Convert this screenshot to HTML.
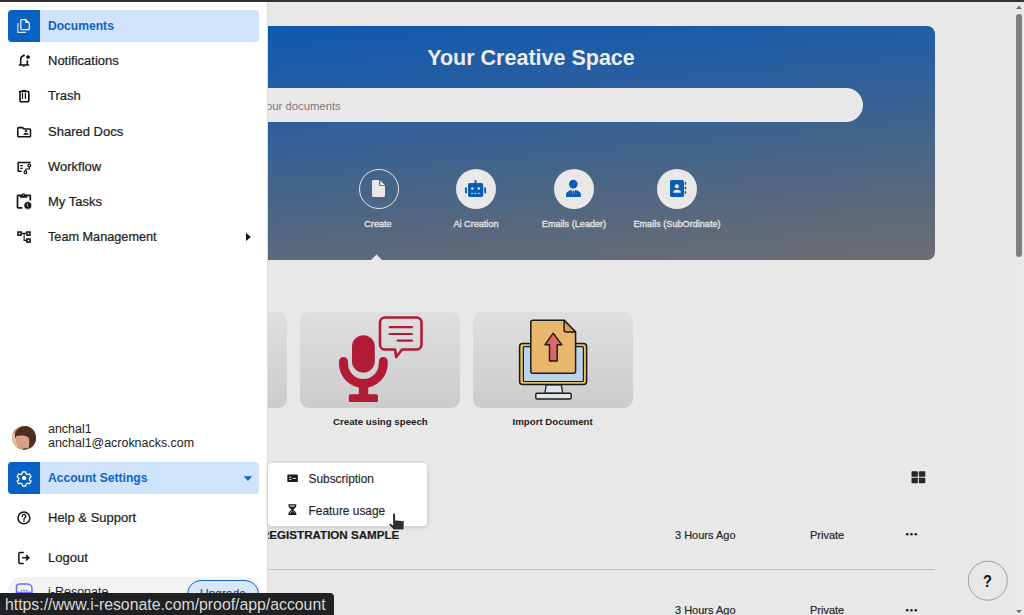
<!DOCTYPE html>
<html><head><meta charset="utf-8">
<style>
*{margin:0;padding:0;box-sizing:border-box}
html,body{width:1024px;height:615px;overflow:hidden;background:#e8e8e8;font-family:"Liberation Sans",sans-serif;position:relative}
.abs{position:absolute}
svg{position:absolute;left:0;top:0;overflow:visible}
#topbar{left:0;top:0;width:1024px;height:2px;background:#323232;z-index:50}
#side{left:0;top:2px;width:267px;height:613px;background:#fff}
.item{position:absolute;left:8px;width:251px;height:32px;font-size:13px;color:#1d1d1d}
.item .ic{position:absolute;left:0;top:0;width:32px;height:32px}
.item .tx{position:absolute;left:40px;top:0;line-height:32px;white-space:nowrap;-webkit-text-stroke:0.22px #1d1d1d}
.item.sel{background:#cfe3fb;border-radius:4px;color:#0e63c6;font-weight:bold}
.item.sel .tx{-webkit-text-stroke:0}
.item.sel .ic{background:#0a62c4;border-radius:4px 0 0 4px}
#banner{left:268px;top:26px;width:667px;height:234px;border-radius:0 8px 8px 0;background:linear-gradient(175deg,#0f59b0 0%,#2a5fa0 30%,#486587 60%,#6e6d71 100%)}
#title{left:268px;top:44.5px;width:526px;text-align:center;color:#ececec;font-size:21.5px;font-weight:bold;line-height:26px}
#search{left:268px;top:88px;width:595px;height:34px;border-radius:0 17px 17px 0;background:#e9e9e9;color:#7a7a7a;font-size:11.3px;line-height:35px}
.circ{position:absolute;width:40px;height:40px;border-radius:50%;background:#e8e8e8}
.lab{position:absolute;color:#e4e4e4;font-size:9.8px;font-weight:normal;-webkit-text-stroke:0.35px #e4e4e4;white-space:nowrap;line-height:12px;transform:translateX(-50%) scaleX(0.93)}
.card{position:absolute;top:312px;width:160px;height:96px;border-radius:9px;background:linear-gradient(180deg,#dfdfdf,#cccccc)}
.clab{position:absolute;top:414.5px;font-size:9.7px;font-weight:bold;color:#222;white-space:nowrap;line-height:14px}
#popup{left:267.5px;top:462.5px;width:159px;height:63px;background:#fff;border-radius:4px;box-shadow:0 1px 5px rgba(0,0,0,.18);z-index:20}
.pi{position:absolute;left:41px;font-size:11.9px;color:#1f1f1f;white-space:nowrap;line-height:14px;-webkit-text-stroke:0.15px #1f1f1f}
.row{position:absolute;font-size:11px;color:#252525;white-space:nowrap;line-height:14px;-webkit-text-stroke:0.2px #252525}
#status{left:0;top:593px;width:334px;height:22px;background:#202122;color:#dadada;font-size:15.85px;line-height:22px;padding-left:5px;padding-top:1px;border-radius:0 4px 0 0;z-index:60;letter-spacing:-0.02px}
</style></head><body>
<div id="topbar" class="abs"></div>

<!-- main area -->
<div id="banner" class="abs"></div>
<div id="title" class="abs">Your Creative Space</div>
<div id="search" class="abs"><span style="position:absolute;left:-2px;top:1px">our documents</span></div>

<div class="circ" style="left:359px;top:169px;background:transparent;border:1.2px solid #e6e6e6"></div>
<div class="circ" style="left:456px;top:169px"></div>
<div class="circ" style="left:554px;top:169px"></div>
<div class="circ" style="left:657px;top:169px"></div>
<div class="lab" id="l1" style="left:378.3px;top:217.5px">Create</div>
<div class="lab" id="l2" style="left:475.5px;top:217.5px">Ai Creation</div>
<div class="lab" id="l3" style="left:573.5px;top:217.5px">Emails (Leader)</div>
<div class="lab" id="l4" style="left:677px;top:217.5px">Emails (SubOrdinate)</div>

<!-- banner icons -->
<svg width="1024" height="615">
  <!-- create doc -->
  <path d="M373.5 180.1h5.6v5.6h5.9v9.9a1.5 1.5 0 0 1-1.5 1.5h-10a1.5 1.5 0 0 1-1.5-1.5v-14a1.5 1.5 0 0 1 1.5-1.5z" fill="#e8e8e8"/>
  <path d="M380.2 180.6l4.6 4.4h-4.6z" fill="#e8e8e8"/>
  <!-- pointer triangle -->
  <path d="M370.5 260.5L376.5 254.5L382.5 260.5Z" fill="#e8e8e8"/>
  <!-- robot -->
  <rect x="468" y="183" width="15.2" height="14" rx="1.8" fill="#0b5cb5"/>
  <rect x="474.6" y="180" width="1.9" height="4" rx="0.9" fill="#0b5cb5"/>
  <rect x="465" y="187.3" width="1.9" height="6.3" rx="0.8" fill="#0b5cb5"/>
  <rect x="484.2" y="187.3" width="1.9" height="6.3" rx="0.8" fill="#0b5cb5"/>
  <circle cx="472.4" cy="188.4" r="1.25" fill="#e8e8e8"/>
  <circle cx="478.8" cy="188.4" r="1.25" fill="#e8e8e8"/>
  <rect x="471.3" y="192.9" width="1.8" height="1" fill="#e8e8e8"/>
  <rect x="474.6" y="192.9" width="1.8" height="1" fill="#e8e8e8"/>
  <rect x="478" y="192.9" width="1.8" height="1" fill="#e8e8e8"/>
  <!-- person leader -->
  <circle cx="573.3" cy="184.1" r="4.3" fill="#0b5cb5"/>
  <path d="M566 197v-2.2c0-2.6 3-4.7 7.4-4.7s7.5 2.1 7.5 4.7v2.2z" fill="#0b5cb5"/>
  <path d="M571.5 190l3.6 0-1.8 6.6z" fill="#e8e8e8"/>
  <path d="M572.8 190.6h1l0.4 1-0.3 3.6-0.6 1-0.6-1-0.3-3.6z" fill="#0b5cb5"/>
  <!-- contact book -->
  <rect x="670" y="179.9" width="14" height="17.1" rx="1.6" fill="#0b5cb5"/>
  <circle cx="676.9" cy="186.3" r="2.1" fill="#e8e8e8"/>
  <path d="M673.2 192.8v-0.8c0-1.3 1.7-2.2 3.8-2.2s3.9 0.9 3.9 2.2v0.8z" fill="#e8e8e8"/>
  <rect x="684.7" y="182" width="1.5" height="3" rx="0.7" fill="#0b5cb5"/>
  <rect x="684.7" y="186.5" width="1.5" height="3" rx="0.7" fill="#0b5cb5"/>
  <rect x="684.7" y="191" width="1.5" height="3" rx="0.7" fill="#0b5cb5"/>
</svg>

<div class="card" style="left:127px"></div>
<div class="card" style="left:300px"></div>
<div class="card" style="left:473px"></div>
<div class="clab" id="c1" style="left:333px">Create using speech</div>
<div class="clab" id="c2" style="left:512.5px">Import Document</div>

<!-- card icons -->
<svg width="1024" height="615">
  <!-- mic -->
  <rect x="352" y="335.2" width="22.8" height="37.4" rx="11.4" fill="#b01b36"/>
  <path d="M343.5 361.5v2a19.8 19.8 0 0 0 39.8 0v-2" stroke="#b01b36" stroke-width="9" fill="none" stroke-linecap="round"/>
  <rect x="358.8" y="382" width="9.4" height="14" fill="#b01b36"/>
  <rect x="348.8" y="394.2" width="29.2" height="7.8" rx="1.6" fill="#b01b36"/>
  <!-- bubble -->
  <path d="M385 317.5h31.5a5 5 0 0 1 5 5v22a5 5 0 0 1-5 5h-14.5l-5.8 7.5-1.2-7.5h-10a5 5 0 0 1-5-5v-22a5 5 0 0 1 5-5z" stroke="#b01b36" stroke-width="2.6" fill="none" stroke-linejoin="round"/>
  <path d="M389.6 327.1h22.4M389.6 334h22.4M397.6 340.6h14.4" stroke="#b01b36" stroke-width="2.2" stroke-linecap="round"/>
  <!-- import doc: monitor -->
  <path d="M546.3 384.8h15l1.5 8.7h-18z" fill="#e1e5e8" stroke="#1a1a1a" stroke-width="1.3"/>
  <rect x="535.8" y="393.2" width="35.4" height="5.8" rx="1.2" fill="#e3e6e9" stroke="#1a1a1a" stroke-width="1.4"/>
  <rect x="519.6" y="343.6" width="67" height="41" rx="3" fill="#e6c062" stroke="#1a1a1a" stroke-width="1.5"/>
  <rect x="523.4" y="346.7" width="60" height="34.8" rx="1" fill="#b8d3ea" stroke="#1a1a1a" stroke-width="1.2"/>
  <!-- doc -->
  <path d="M532.8 320.3h31.3l11.5 11.7v39.3a2 2 0 0 1-2 2h-40.8a2 2 0 0 1-2-2v-49a2 2 0 0 1 2-2z" fill="#e8b66c" stroke="#1a1a1a" stroke-width="1.5" stroke-linejoin="round"/>
  <path d="M564.1 320.3v9.7a2 2 0 0 0 2 2h9.5z" fill="#d9a253" stroke="#1a1a1a" stroke-width="1.4" stroke-linejoin="round"/>
  <path d="M553.2 333.2l8.6 11.6h-4.6v16.2h-7.7v-16.2h-4.6z" fill="#d9676b" stroke="#1a1a1a" stroke-width="1.4" stroke-linejoin="round"/>
</svg>

<div class="row" id="reg" style="left:261px;top:528.2px;font-weight:bold;font-size:11.6px;color:#1a1a1a">REGISTRATION SAMPLE</div>
<div class="row" style="left:675px;top:528px">3 Hours Ago</div>
<div class="row" style="left:810px;top:528px">Private</div>
<div class="abs" style="left:267px;top:569px;width:668px;height:1px;background:#c2c2c2"></div>
<div class="row" style="left:675px;top:603px">3 Hours Ago</div>
<div class="row" style="left:810px;top:603px">Private</div>
<svg width="1024" height="615">
  <!-- grid -->
  <rect x="911.5" y="471.3" width="6.4" height="5.5" rx="0.8" fill="#262626"/>
  <rect x="918.9" y="471.3" width="6.4" height="5.5" rx="0.8" fill="#262626"/>
  <rect x="911.5" y="477.7" width="6.4" height="5.5" rx="0.8" fill="#262626"/>
  <rect x="918.9" y="477.7" width="6.4" height="5.5" rx="0.8" fill="#262626"/>
  <!-- dots -->
  <circle cx="907.2" cy="534.3" r="1.3" fill="#1e1e1e"/><circle cx="911.5" cy="534.3" r="1.3" fill="#1e1e1e"/><circle cx="915.8" cy="534.3" r="1.3" fill="#1e1e1e"/>
  <circle cx="907.2" cy="610.3" r="1.3" fill="#1e1e1e"/><circle cx="911.5" cy="610.3" r="1.3" fill="#1e1e1e"/><circle cx="915.8" cy="610.3" r="1.3" fill="#1e1e1e"/>
  <!-- help -->
  <circle cx="987.8" cy="580.7" r="19.5" fill="none" stroke="#a2a2a2" stroke-width="1"/>
  <!-- scrollbar -->
  <rect x="1014" y="2" width="10" height="613" fill="#eaeaea"/>
  <path d="M1016 9h6l-3-3.2z" fill="#6e6e6e"/>
  <rect x="1016" y="14" width="6" height="243" rx="3" fill="#7e7e7e"/>
  <path d="M1016 610h6l-3 3.2z" fill="#6e6e6e"/>
</svg>
<div class="abs" style="left:982.8px;top:572px;font-size:17px;font-weight:bold;color:#111;line-height:20px;transform:scaleX(0.85);transform-origin:left">?</div>

<div id="popup" class="abs">
  <div class="pi" id="p1" style="top:9.5px">Subscription</div>
  <div class="pi" id="p2" style="top:41.5px">Feature usage</div>
  <svg width="159" height="63">
    <rect x="19.3" y="11.5" width="10.6" height="7.6" rx="1.2" fill="#1a1a1a"/>
    <path d="M21.2 14.2h2.2M21.2 16.4h2.2M24.6 15.3h3.6" stroke="#fff" stroke-width="0.9"/>
    <path d="M20.4 41.8h8M20.4 51.3h8M21.3 42.2v1.5l3 3-3 3v1.5M27.5 42.2v1.5l-3 3 3 3v1.5" stroke="#1a1a1a" stroke-width="1.2" fill="none"/>
    <path d="M21.5 43.5h6l-3 3.3z M21.5 51h6l-3-3.3z" fill="#1a1a1a"/>
  </svg>
</div>

<!-- sidebar -->
<div id="side" class="abs"></div>
<div class="abs" style="left:267px;top:2px;width:1px;height:613px;background:#dedede"></div>
<div class="item sel" style="top:10px"><div class="ic"></div><div class="tx" id="t1" style="font-size:12.1px">Documents</div></div>
<div class="item" style="top:45px"><div class="tx" id="t2">Notifications</div></div>
<div class="item" style="top:80px"><div class="tx">Trash</div></div>
<div class="item" style="top:115.5px"><div class="tx">Shared Docs</div></div>
<div class="item" style="top:150.5px"><div class="tx">Workflow</div></div>
<div class="item" style="top:185.5px"><div class="tx">My Tasks</div></div>
<div class="item" style="top:220.5px"><div class="tx" id="t3" style="font-size:12.7px">Team Management</div></div>

<div class="abs" style="left:48px;top:421.5px;font-size:12.45px;color:#222;line-height:14px;white-space:nowrap">anchal1<br>anchal1@acroknacks.com</div>

<div class="item sel" style="top:462px"><div class="ic"></div><div class="tx" id="t4" style="font-size:12.1px">Account Settings</div></div>
<div class="item" style="top:502px"><div class="tx">Help &amp; Support</div></div>
<div class="item" style="top:542px"><div class="tx">Logout</div></div>

<!-- bottom card -->
<div class="abs" style="left:8px;top:577px;width:252px;height:50px;background:#f3f3f3;border-radius:14px"></div>
<div class="abs" style="left:48px;top:585px;font-size:12.5px;color:#1f1f1f;line-height:14px">i-Resonate</div>
<div class="abs" style="left:187px;top:579.5px;width:72px;height:30px;border-radius:14px;background:#d6e6fb;border:1px solid #1565c0;color:#3c3c3c;font-size:12px;line-height:26px;text-align:center">Upgrade</div>

<svg width="1024" height="615" style="z-index:30">
  <!-- documents icon -->
  <path d="M17.9 23.3v9.1h8" stroke="#d8e6f6" stroke-width="1.2" fill="none"/>
  <path d="M22 19.6h3.7l3.6 3.6v5.3a1.2 1.2 0 0 1-1.2 1.2h-6.1a1.2 1.2 0 0 1-1.2-1.2v-7.7a1.2 1.2 0 0 1 1.2-1.2z" stroke="#fff" stroke-width="1.2" fill="none"/>
  <path d="M25.3 19.6v3.3h4z" fill="#fff"/>
  <!-- bell -->
  <path d="M20.7 64.5v-5c0-2.1 1.3-3.4 3.1-3.9" stroke="#111" stroke-width="1.55" fill="none" stroke-linecap="round"/>
  <circle cx="23.9" cy="55.5" r="0.95" fill="#111"/>
  <path d="M27.3 60.3v4.4M18.8 64.9h10.3" stroke="#111" stroke-width="1.55" fill="none"/>
  <circle cx="28" cy="57" r="1.85" fill="#111"/>
  <path d="M22.4 65.4h2.8a1.4 1.4 0 0 1-2.8 0z" fill="#111"/>
  <!-- trash -->
  <path d="M18.9 91.5h10.2" stroke="#111" stroke-width="1.5"/>
  <path d="M22.1 90.4h3.8l0.5 1h-4.8z" fill="#111" stroke="#111" stroke-width="0.8"/>
  <path d="M20 91.8v8.8a1.2 1.2 0 0 0 1.2 1.2h6.4a1.2 1.2 0 0 0 1.2-1.2v-8.8" stroke="#111" stroke-width="1.6" fill="none"/>
  <path d="M22.5 93.4v5M25.4 93.4v5" stroke="#111" stroke-width="1.2" stroke-linecap="round"/>
  <!-- shared docs folder -->
  <path d="M18.6 127.6h4l1.3 1.3h5.8a0.8 0.8 0 0 1 0.8 0.8v6.2a0.8 0.8 0 0 1-0.8 0.8h-11.1a0.8 0.8 0 0 1-0.8-0.8v-7.5a0.8 0.8 0 0 1 0.8-0.8z" stroke="#111" stroke-width="1.55" fill="none"/>
  <circle cx="26" cy="131.1" r="1.2" fill="#111"/>
  <path d="M23.3 134.8c0-1.2 1.3-1.7 2.7-1.7s2.7 0.5 2.7 1.7z" fill="#111"/>
  <!-- workflow -->
  <path d="M30.6 162.5h-12.4v8.8h3.5" stroke="#111" stroke-width="1.5" fill="none"/>
  <path d="M20.2 165.6h2.6M20.2 168.4h2.6" stroke="#111" stroke-width="1.35"/>
  <circle cx="29.3" cy="165.5" r="1.35" stroke="#111" stroke-width="1.2" fill="none"/>
  <circle cx="25.4" cy="172.3" r="1.35" stroke="#111" stroke-width="1.2" fill="none"/>
  <path d="M29.3 166.9v2.1h-3.3l-0.4 2" stroke="#111" stroke-width="1.2" fill="none"/>
  <!-- my tasks -->
  <path d="M22.4 207.8h-4.3a0.6 0.6 0 0 1-0.6-0.6v-11.2a0.6 0.6 0 0 1 0.6-0.6h11.6a0.6 0.6 0 0 1 0.6 0.6v4.4" stroke="#111" stroke-width="1.7" fill="none"/>
  <path d="M19.9 195.2h7.3v2.6h-7.3z" fill="#111"/>
  <circle cx="23.5" cy="195" r="1.7" fill="#111"/>
  <circle cx="23.5" cy="195.1" r="0.55" fill="#fff"/>
  <circle cx="27.8" cy="205.4" r="4" stroke="#fff" stroke-width="0.8" fill="#111"/>
  <path d="M27.4 203.3v2.4l1.2 1.2" stroke="#fff" stroke-width="0.75" fill="none"/>
  <!-- team mgmt -->
  <rect x="18" y="232" width="3.1" height="3.1" stroke="#111" stroke-width="1.55" fill="none"/>
  <rect x="26.9" y="232" width="3.1" height="3.1" stroke="#111" stroke-width="1.55" fill="none"/>
  <rect x="26.9" y="239" width="3.1" height="3.1" stroke="#111" stroke-width="1.55" fill="none"/>
  <path d="M21.3 233.4h5.4M24.1 233.4v7h2.6" stroke="#111" stroke-width="1.1" fill="none"/>
  <!-- arrow -->
  <path d="M246 232.9v8l4.9-4z" fill="#111"/>
  <!-- gear -->
  <g transform="translate(24.1 477.9)">
    <path d="M-1.5 -6.1h3l0.5 1.9 1.5 0.85 1.9-0.55 1.5 2.6-1.4 1.35v1.9l1.4 1.35-1.5 2.6-1.9-0.55-1.5 0.85-0.5 1.9h-3l-0.5-1.9-1.5-0.85-1.9 0.55-1.5-2.6 1.4-1.35v-1.9l-1.4-1.35 1.5-2.6 1.9 0.55 1.5-0.85z" stroke="#fff" stroke-width="1.3" fill="none" stroke-linejoin="miter"/>
    <rect x="-2" y="-2" width="4" height="4" rx="1.5" fill="#fff"/>
  </g>
  <path d="M243.8 476.2h8.2l-4.1 4.7z" fill="#0e63c6"/>
  <!-- help -->
  <circle cx="23.9" cy="517.9" r="5.9" stroke="#111" stroke-width="1.5" fill="none"/>
  <path d="M22.3 516.2a1.75 1.75 0 1 1 2.6 1.5c-0.6 0.4-0.9 0.8-0.9 1.5" stroke="#111" stroke-width="1.35" fill="none" stroke-linecap="round"/>
  <circle cx="24" cy="521.1" r="0.85" fill="#111"/>
  <!-- logout -->
  <path d="M23.8 552.5h-3.9a1 1 0 0 0-1 1v8.9a1 1 0 0 0 1 1h3.9" stroke="#111" stroke-width="1.5" fill="none"/>
  <path d="M22.1 557.8h5.8M26 555.1l2.7 2.7-2.7 2.7" stroke="#111" stroke-width="1.6" fill="none"/>
  <!-- i-resonate icon -->
  <path d="M16.5 587a3 3 0 0 1 3-3h8a4.5 4.5 0 0 1 4.5 4.5v4h-15.5z" stroke="#6d6dff" stroke-width="1.5" fill="none"/>
  <circle cx="21.5" cy="590.5" r="0.8" fill="#6d6dff"/><circle cx="24" cy="590.5" r="0.8" fill="#6d6dff"/><circle cx="26.5" cy="590.5" r="0.8" fill="#6d6dff"/>
  <!-- avatar -->
  <defs><clipPath id="av"><circle cx="24" cy="437.8" r="12"/></clipPath></defs>
  <g clip-path="url(#av)">
    <rect x="12" y="425.8" width="24" height="24" fill="#c48a68"/>
    <ellipse cx="15" cy="441" rx="4" ry="8" fill="#e2bfa2"/>
    <path d="M15 434c1-5 6-8 11-8 6 0 10 4 10 10v14h-7c1-3 2-6 1-10-1-2-4-3-7-3-3 0-6 0-8 1z" fill="#4e2d22"/>
    <path d="M16.5 435c3-1 7-1 10 1 2 1 3 3 3 6 0 3-1 5-3 7h-6c-2-1-4-4-4.5-7-0.5-2-0.5-5 0.5-7z" fill="#d9a088"/>
    <path d="M16 434.5c3-2 8-2 11 0 2 1 3 2 3.5 4l-1 0.5c-1-2-3-3-5-3.3-3-0.5-6 0-8 0.5z" fill="#4e2d22"/>
    <ellipse cx="29.5" cy="439" rx="1.2" ry="2" fill="#c88670"/>
    <path d="M29 436v14h7v-14z" fill="#4e2d22" opacity="0.9"/>
    <ellipse cx="25.5" cy="450.5" rx="3.5" ry="2.5" fill="#24585b"/>
  </g>
  <!-- cursor -->
  <path d="M393.1 514.5a1 1 0 0 1 2 0v5.9h2.6l0.3 0.3h2.3l0.3 0.3h2.6l0.5 0.5v7.9h-10l-4.6-4.6 1.3-1.3 2.7 2.2z" fill="#2e2e2e" stroke="#fff" stroke-width="1.6" stroke-linejoin="round" paint-order="stroke"/>
</svg>

<div id="status" class="abs">https://www.i-resonate.com/proof/app/account</div>
</body></html>
